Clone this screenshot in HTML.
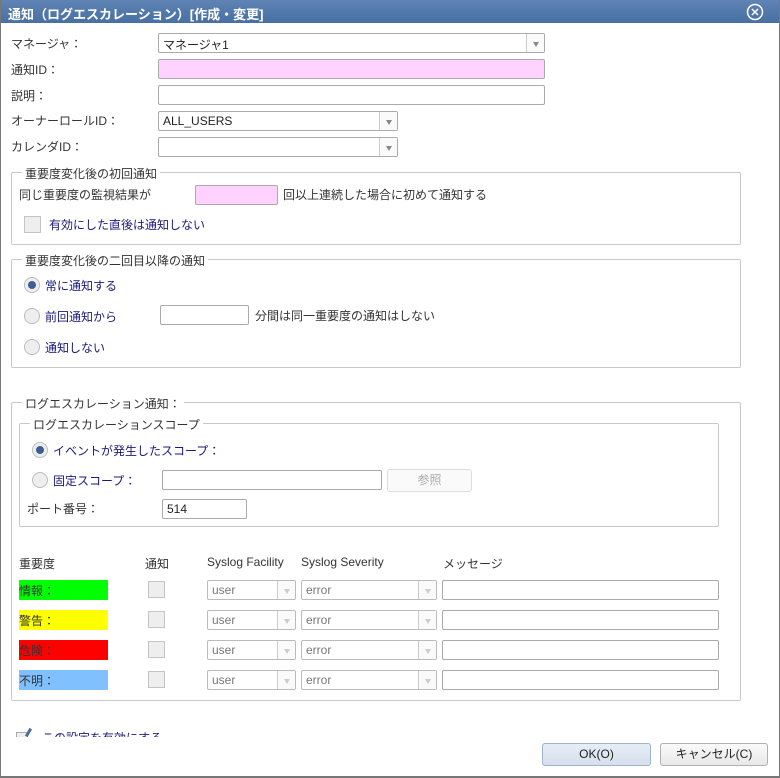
<!DOCTYPE html><html><head><meta charset="utf-8"><style>
*{box-sizing:border-box;margin:0;padding:0}
body{width:780px;height:778px;position:relative;background:#fff;font-family:"Liberation Sans","Noto Sans CJK JP",sans-serif;font-size:12px;color:#333;overflow:hidden}
.a{position:absolute;white-space:nowrap}
.frame{position:absolute;left:0;top:0;width:780px;height:778px;border:1px solid #777;border-top:none;border-bottom:2px solid #777}
.title{position:absolute;left:0;top:0;width:780px;height:23px;background:linear-gradient(#5f83b4,#4870a3);color:#fff;font-weight:bold;font-size:13px;padding:4px 8px}
.in{position:absolute;border:1px solid #aaa;border-radius:2px;background:#fff;height:20px;padding:2px 4px;font-size:12px;color:#222}
.pink{background:#ffd2ff}
.sel::after{content:"";position:absolute;right:0;top:0;width:17px;height:18px;border-left:1px solid #ccc;background:#fafafa}
.arr{position:absolute;right:5px;top:8px;width:0;height:0;border-left:3px solid transparent;border-right:3px solid transparent;border-top:5px solid #888;z-index:2}
.dis{color:#888;border-color:#bbb}
.dis .arr{border-top-color:#ccc}
fieldset{position:absolute;border:1px solid #c8c8c8;border-radius:2px}
.leg{position:absolute;background:#fff;padding:0 3px;color:#333}
.rad{position:absolute;width:16px;height:16px;border-radius:50%;border:1px solid #bbb;background:#eee}
.rad.on::after{content:"";position:absolute;left:3px;top:3px;width:8px;height:8px;border-radius:50%;background:#3e5f8f}
.chk{position:absolute;width:17px;height:17px;border:1px solid #c4c4c4;background:#eee}
.blue{color:#1a1a7a}
.btn{position:absolute;height:23px;border:1px solid #b0b0b0;border-radius:3px;background:linear-gradient(#fafafa,#e8e8e8);text-align:center;line-height:21px;color:#222}
</style></head><body>
<div class="title">通知（ログエスカレーション）[作成・変更]</div>
<svg class="a" style="left:746px;top:3px" width="18" height="18"><circle cx="9" cy="9" r="7.5" fill="none" stroke="#fff" stroke-width="1.5"/><path d="M6 6L12 12M12 6L6 12" stroke="#fff" stroke-width="1.5"/></svg>
<div class="frame"></div>

<div class="a" style="left:11px;top:35px">マネージャ：</div>
<div class="in sel" style="left:158px;top:33px;width:387px">マネージャ1<span class="arr"></span></div>
<div class="a" style="left:11px;top:61px">通知ID：</div>
<div class="in pink" style="left:158px;top:59px;width:387px"></div>
<div class="a" style="left:11px;top:87px">説明：</div>
<div class="in" style="left:158px;top:85px;width:387px"></div>
<div class="a" style="left:11px;top:112px">オーナーロールID：</div>
<div class="in sel" style="left:158px;top:111px;width:240px">ALL_USERS<span class="arr"></span></div>
<div class="a" style="left:11px;top:138px">カレンダID：</div>
<div class="in sel" style="left:158px;top:137px;width:240px"><span class="arr"></span></div>

<fieldset style="left:11px;top:172px;width:730px;height:73px"></fieldset>
<div class="leg a" style="left:22px;top:165px">重要度変化後の初回通知</div>
<div class="a" style="left:19px;top:186px">同じ重要度の監視結果が</div>
<div class="in pink" style="left:195px;top:185px;width:83px"></div>
<div class="a" style="left:283px;top:186px">回以上連続した場合に初めて通知する</div>
<div class="chk" style="left:24px;top:216px"></div>
<div class="a blue" style="left:49px;top:216px">有効にした直後は通知しない</div>

<fieldset style="left:11px;top:259px;width:730px;height:109px"></fieldset>
<div class="leg a" style="left:22px;top:252px">重要度変化後の二回目以降の通知</div>
<div class="rad on" style="left:24px;top:277px"></div>
<div class="a blue" style="left:45px;top:277px">常に通知する</div>
<div class="rad" style="left:24px;top:308px"></div>
<div class="a blue" style="left:45px;top:308px">前回通知から</div>
<div class="in" style="left:160px;top:305px;width:89px"></div>
<div class="a" style="left:255px;top:307px">分間は同一重要度の通知はしない</div>
<div class="rad" style="left:24px;top:339px"></div>
<div class="a blue" style="left:45px;top:339px">通知しない</div>

<fieldset style="left:11px;top:402px;width:730px;height:299px"></fieldset>
<div class="leg a" style="left:22px;top:395px">ログエスカレーション通知：</div>
<fieldset style="left:19px;top:423px;width:700px;height:104px"></fieldset>
<div class="leg a" style="left:30px;top:416px">ログエスカレーションスコープ</div>
<div class="rad on" style="left:32px;top:442px"></div>
<div class="a blue" style="left:53px;top:442px">イベントが発生したスコープ：</div>
<div class="rad" style="left:32px;top:472px"></div>
<div class="a blue" style="left:53px;top:472px">固定スコープ：</div>
<div class="in" style="left:162px;top:470px;width:220px"></div>
<div class="btn" style="left:387px;top:469px;width:85px;color:#aaa;border-color:#ddd;background:#fafafa">参照</div>
<div class="a" style="left:27px;top:500px">ポート番号：</div>
<div class="in" style="left:162px;top:499px;width:85px">514</div>

<div class="a" style="left:19px;top:555px">重要度</div>
<div class="a" style="left:145px;top:555px">通知</div>
<div class="a" style="left:207px;top:555px">Syslog Facility</div>
<div class="a" style="left:301px;top:555px">Syslog Severity</div>
<div class="a" style="left:443px;top:555px">メッセージ</div>

<div class="a" style="left:19px;top:580px;width:89px;height:20px;background:#00ff00;padding-top:2px">情報：</div>
<div class="a" style="left:19px;top:610px;width:89px;height:20px;background:#ffff00;padding-top:2px">警告：</div>
<div class="a" style="left:19px;top:640px;width:89px;height:20px;background:#ff0000;padding-top:2px">危険：</div>
<div class="a" style="left:19px;top:670px;width:89px;height:20px;background:#80c0ff;padding-top:2px">不明：</div>

<div class="chk" style="left:148px;top:581px"></div>
<div class="chk" style="left:148px;top:611px"></div>
<div class="chk" style="left:148px;top:641px"></div>
<div class="chk" style="left:148px;top:671px"></div>

<div class="in sel dis" style="left:207px;top:580px;width:89px;color:#777">user<span class="arr"></span></div>
<div class="in sel dis" style="left:207px;top:610px;width:89px;color:#777">user<span class="arr"></span></div>
<div class="in sel dis" style="left:207px;top:640px;width:89px;color:#777">user<span class="arr"></span></div>
<div class="in sel dis" style="left:207px;top:670px;width:89px;color:#777">user<span class="arr"></span></div>
<div class="in sel dis" style="left:301px;top:580px;width:136px;color:#777">error<span class="arr"></span></div>
<div class="in sel dis" style="left:301px;top:610px;width:136px;color:#777">error<span class="arr"></span></div>
<div class="in sel dis" style="left:301px;top:640px;width:136px;color:#777">error<span class="arr"></span></div>
<div class="in sel dis" style="left:301px;top:670px;width:136px;color:#777">error<span class="arr"></span></div>
<div class="in" style="left:442px;top:580px;width:277px"></div>
<div class="in" style="left:442px;top:610px;width:277px"></div>
<div class="in" style="left:442px;top:640px;width:277px"></div>
<div class="in" style="left:442px;top:670px;width:277px"></div>

<div class="a" style="left:14px;top:728px;width:300px;height:9px;overflow:hidden">
<div class="a blue" style="left:28px;top:1px">この設定を有効にする</div>
<div class="a" style="left:2px;top:4px;width:12px;height:10px;border:1px solid #aaa;background:#eee"></div>
<div class="a" style="left:13px;top:0px;width:3px;height:9px;background:#4a6fa0;transform:rotate(30deg)"></div>
</div>

<div class="btn" style="left:542px;top:743px;width:109px;background:linear-gradient(#e6edf6,#d6e0ec);border-color:#9eb3cc">OK(O)</div>
<div class="btn" style="left:660px;top:743px;width:108px">キャンセル(C)</div>
</body></html>
